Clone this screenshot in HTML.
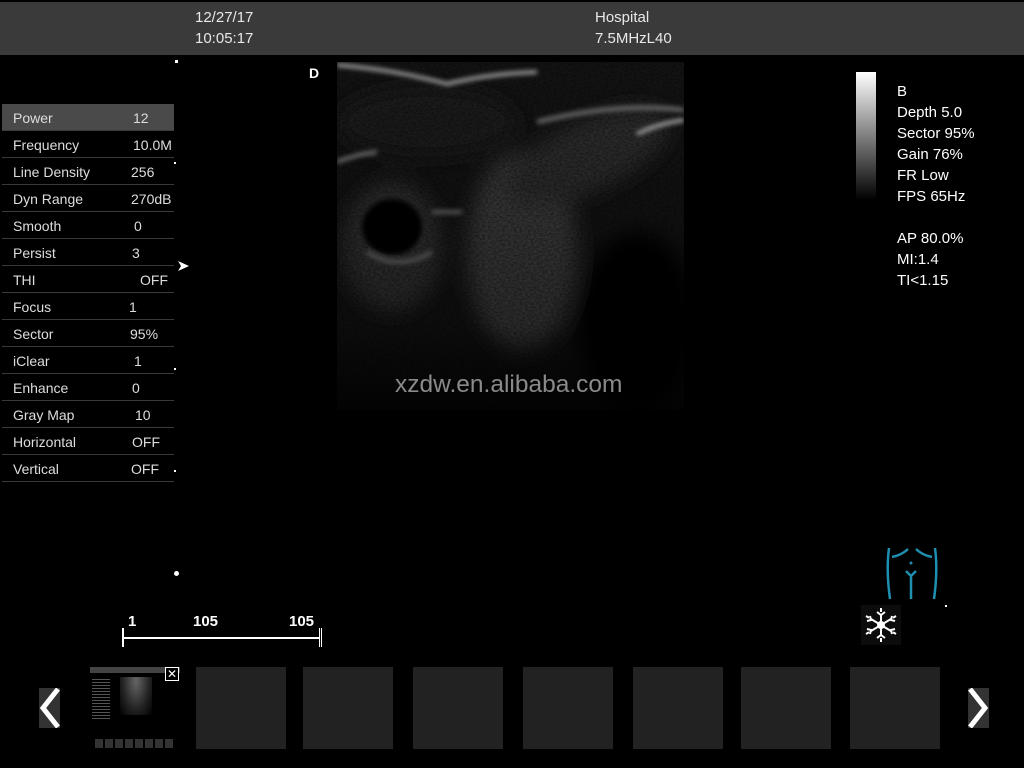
<!DOCTYPE html>
<html><head><meta charset="utf-8"><style>
body{margin:0;width:1024px;height:768px;background:#000;position:relative;overflow:hidden;font-family:"Liberation Sans",sans-serif;}
.a{position:absolute;}
.hdr{left:0;top:2px;width:1024px;height:53px;background:#3a3a3a;color:#e8e8e8;font-size:15px;}
.row{position:absolute;left:2px;width:172px;height:26px;border-bottom:1px solid #3a3a3a;color:#ddd;font-size:14px;}
.row span{position:absolute;top:6px;}
.info{left:897px;color:#fff;font-size:15px;line-height:21px;}
.th{position:absolute;top:667px;width:90px;height:82px;background:#222;}
.num{color:#fff;font-weight:bold;font-size:15px;}
</style></head><body>
<div class="a hdr">
<div class="a" style="left:195px;top:5px;line-height:21px">12/27/17<br>10:05:17</div>
<div class="a" style="left:595px;top:5px;line-height:21px">Hospital<br>7.5MHzL40</div>
</div>
<div class="a" style="left:175px;top:60px;width:3px;height:3px;background:#fff"></div>
<div class="a" style="left:174px;top:571px;width:5px;height:5px;border-radius:50%;background:#fff"></div>
<div class="a" style="left:174px;top:162px;width:2px;height:2px;background:#fff"></div>
<div class="a" style="left:174px;top:368px;width:2px;height:2px;background:#fff"></div>
<div class="a" style="left:174px;top:470px;width:2px;height:2px;background:#fff"></div>
<svg class="a" style="left:176px;top:260px" width="14" height="12"><path d="M2 1 L13 6 L2 11 L5 6Z" fill="#fff"/></svg>
<div class="a num" style="left:309px;top:65px;font-size:14px">D</div>

<div class="row" style="top:104px;background:#4a4a4a"><span style="left:11px">Power</span><span style="left:131px">12</span></div>
<div class="row" style="top:131px"><span style="left:11px">Frequency</span><span style="left:131px">10.0M</span></div>
<div class="row" style="top:158px"><span style="left:11px">Line Density</span><span style="left:129px">256</span></div>
<div class="row" style="top:185px"><span style="left:11px">Dyn Range</span><span style="left:129px">270dB</span></div>
<div class="row" style="top:212px"><span style="left:11px">Smooth</span><span style="left:132px">0</span></div>
<div class="row" style="top:239px"><span style="left:11px">Persist</span><span style="left:130px">3</span></div>
<div class="row" style="top:266px"><span style="left:11px">THI</span><span style="left:138px">OFF</span></div>
<div class="row" style="top:293px"><span style="left:11px">Focus</span><span style="left:127px">1</span></div>
<div class="row" style="top:320px"><span style="left:11px">Sector</span><span style="left:128px">95%</span></div>
<div class="row" style="top:347px"><span style="left:11px">iClear</span><span style="left:132px">1</span></div>
<div class="row" style="top:374px"><span style="left:11px">Enhance</span><span style="left:130px">0</span></div>
<div class="row" style="top:401px"><span style="left:11px">Gray Map</span><span style="left:133px">10</span></div>
<div class="row" style="top:428px"><span style="left:11px">Horizontal</span><span style="left:130px">OFF</span></div>
<div class="row" style="top:455px"><span style="left:11px">Vertical</span><span style="left:129px">OFF</span></div>

<svg class="a" style="left:337px;top:62px" width="347" height="348">
<defs>
<filter id="b"><feGaussianBlur stdDeviation="10"/></filter>
<filter id="b2"><feGaussianBlur stdDeviation="2.5"/></filter>
<filter id="n"><feTurbulence type="fractalNoise" baseFrequency="0.35 0.6" numOctaves="2" seed="3"/><feColorMatrix values="0 0 0 0 0  0 0 0 0 0  0 0 0 0 0  0 0 0 -1.6 1.1"/></filter>
<linearGradient id="fade" x1="0" y1="0" x2="0" y2="1"><stop offset="0" stop-color="#000" stop-opacity="0"/><stop offset="0.75" stop-color="#000" stop-opacity="0.3"/><stop offset="1" stop-color="#000" stop-opacity="0.85"/></linearGradient>
</defs>
<rect width="347" height="348" fill="#141414"/>
<g filter="url(#b)">
<ellipse cx="185" cy="190" rx="55" ry="100" fill="#3c3c3c"/>
<ellipse cx="250" cy="95" rx="90" ry="35" fill="#2e2e2e" transform="rotate(-25 250 95)"/>
<ellipse cx="55" cy="185" rx="50" ry="65" fill="#303030"/>
<ellipse cx="300" cy="260" rx="60" ry="90" fill="#040404"/>
<ellipse cx="90" cy="60" rx="90" ry="35" fill="#1a1a1a"/>
</g>
<rect width="347" height="348" filter="url(#n)" opacity="0.5"/>
<g filter="url(#b2)">
<ellipse cx="55" cy="165" rx="30" ry="28" fill="#050505"/>
<path d="M0 3 Q60 8 110 22 Q150 12 200 10" stroke="#999" stroke-width="4" fill="none"/>
<path d="M200 60 Q280 40 347 48" stroke="#666" stroke-width="5" fill="none"/>
<path d="M300 72 Q320 62 347 58" stroke="#aaa" stroke-width="4" fill="none"/>
<path d="M0 100 Q20 92 40 90" stroke="#777" stroke-width="4" fill="none"/>
<path d="M30 190 Q60 210 95 190" stroke="#666" stroke-width="4" fill="none"/>
<path d="M95 150 L125 150" stroke="#666" stroke-width="4" fill="none"/>
</g>
<rect width="347" height="348" fill="url(#fade)"/>
</svg>
<div class="a" style="left:395px;top:371px;color:#8a8a8a;font-size:24.5px">xzdw.en.alibaba.com</div>

<div class="a" style="left:856px;top:72px;width:20px;height:128px;background:linear-gradient(#fff,#000)"></div>
<div class="a info" style="top:81px">B<br>Depth 5.0<br>Sector 95%<br>Gain 76%<br>FR Low<br>FPS 65Hz<br><br>AP 80.0%<br>MI:1.4<br>TI&lt;1.15</div>

<svg class="a" style="left:884px;top:545px" width="56" height="56" fill="none" stroke="#1f8fb0" stroke-width="2.5">
<path d="M5 3 Q2 25 6 54"/><path d="M51 3 Q54 25 50 54"/>
<path d="M8 12 Q18 10 24 4"/><path d="M48 12 Q38 10 32 4"/>
<circle cx="27" cy="18" r="1.5" fill="#1f8fb0" stroke="none"/>
<path d="M22 26 L27 31 L32 26 M27 31 L27 54"/>
</svg>
<div class="a" style="left:945px;top:605px;width:2px;height:2px;background:#fff"></div>
<div class="a" style="left:861px;top:605px;width:40px;height:40px;background:#0c0c0c"></div>
<svg class="a" style="left:861px;top:605px" width="40" height="40" stroke="#fff" stroke-width="2">
<path d="M20 3 V37 M5 11 L35 29 M5 29 L35 11"/>
<path d="M16 7 L20 10 L24 7 M16 33 L20 30 L24 33 M6 16 L10 15 L9 11 M31 29 L30 25 L34 24 M6 24 L10 25 L9 29 M31 11 L30 15 L34 16"/>
<circle cx="20" cy="20" r="3" fill="#fff"/>
</svg>

<div class="a num" style="left:128px;top:613px">1</div>
<div class="a num" style="left:193px;top:613px">105</div>
<div class="a num" style="left:289px;top:613px">105</div>
<div class="a" style="left:122px;top:637px;width:198px;height:2px;background:#fff"></div>
<div class="a" style="left:122px;top:628px;width:2px;height:19px;background:#fff"></div>
<div class="a" style="left:319px;top:628px;width:1px;height:19px;background:#fff"></div>
<div class="a" style="left:321px;top:628px;width:1px;height:19px;background:#fff"></div>

<div class="a" style="left:39px;top:688px;width:21px;height:40px;background:#333"></div>
<svg class="a" style="left:39px;top:688px" width="21" height="40"><path d="M19 1 L4 20 L19 39" stroke="#fff" stroke-width="5" fill="none"/></svg>
<div class="a" style="left:968px;top:688px;width:21px;height:40px;background:#333"></div>
<svg class="a" style="left:968px;top:688px" width="21" height="40"><path d="M2 1 L17 20 L2 39" stroke="#fff" stroke-width="5" fill="none"/></svg>

<div class="th" style="left:90px;background:#000">
<div class="a" style="left:0;top:0;width:90px;height:6px;background:#444"></div>
<div class="a" style="left:30px;top:10px;width:32px;height:38px;background:radial-gradient(ellipse at 50% 10%,#666,#222 60%,#000)"></div>
<div class="a" style="left:2px;top:12px;width:18px;height:42px;background:repeating-linear-gradient(#555 0 1px,#000 1px 3px)"></div>
<div class="a" style="left:5px;top:72px;width:80px;height:9px;background:repeating-linear-gradient(90deg,#333 0 8px,#000 8px 10px)"></div>
</div>
<div class="a" style="left:165px;top:667px;width:12px;height:12px;border:1px solid #fff;color:#fff;font-size:12px;line-height:12px;text-align:center;background:#000">✕</div>
<div class="th" style="left:196px"></div>
<div class="th" style="left:303px"></div>
<div class="th" style="left:413px"></div>
<div class="th" style="left:523px"></div>
<div class="th" style="left:633px"></div>
<div class="th" style="left:741px"></div>
<div class="th" style="left:850px"></div>
</body></html>
